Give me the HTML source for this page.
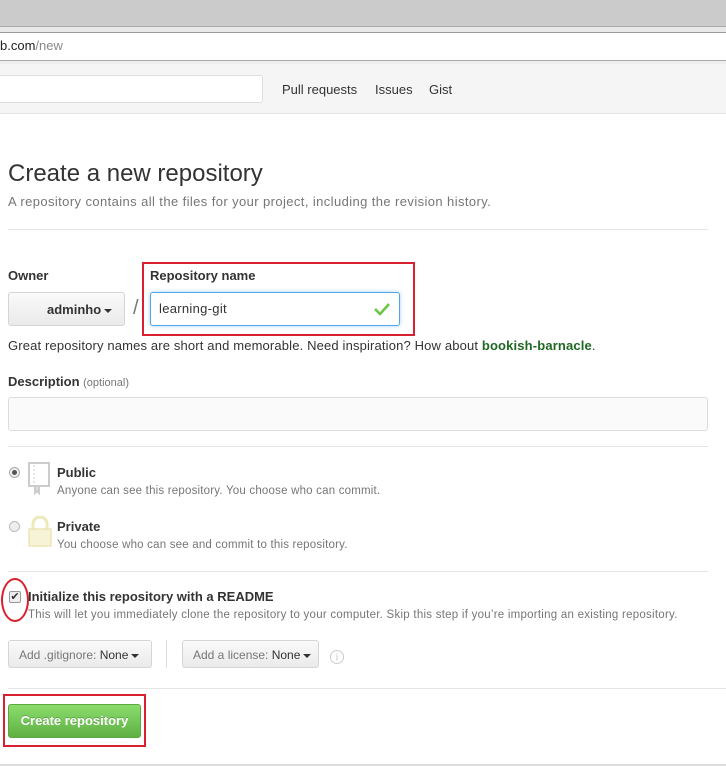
<!DOCTYPE html>
<html><head><style>
*{box-sizing:border-box;margin:0;padding:0}
body{width:726px;height:766px;overflow:hidden;background:#fff;font-family:"Liberation Sans",sans-serif;color:#333;position:relative;font-size:12px}
.a{position:absolute;white-space:nowrap}
.hr{position:absolute;left:8px;right:0;height:1px;background:#e5e5e5}
.btn{position:absolute;border:1px solid #d5d5d5;border-radius:3px;background:linear-gradient(#fafafa,#eaeaea);font-size:12px;color:#777}
.caret{display:inline-block;width:0;height:0;border-left:4px solid transparent;border-right:4px solid transparent;border-top:4px solid #333;vertical-align:middle;margin-left:3px}
</style></head><body>
<div class="a" style="left:0;top:0;width:726px;height:26px;background:#cbcbcb"></div>
<div class="a" style="left:0;top:26px;width:726px;height:6px;background:#e8e8e8;border-top:1px solid #aaa"></div>
<div class="a" style="left:0;top:32px;width:726px;height:28px;background:#fff;border-top:1px solid #999"></div>
<div class="a" style="left:0;top:38px;font-size:13px;color:#222">b.com<span style="color:#888">/new</span></div>
<div class="a" style="left:0;top:60px;width:726px;height:4px;background:#eee;border-top:1px solid #aaa"></div>
<div class="a" style="left:0;top:64px;width:726px;height:50px;background:#f5f5f5;border-bottom:1px solid #e5e5e5"></div>
<div class="a" style="left:-4px;top:75px;width:267px;height:28px;background:#fff;border:1px solid #ddd;border-radius:3px"></div>
<div class="a" style="left:282px;top:82px;font-size:13px;color:#333">Pull requests</div>
<div class="a" style="left:375px;top:82px;font-size:13px;color:#333">Issues</div>
<div class="a" style="left:429px;top:82px;font-size:13px;color:#333">Gist</div>

<div class="a" style="left:8px;top:160px;font-size:24px;color:#333">Create a new repository</div>
<div class="a" style="left:8px;top:194px;font-size:13px;letter-spacing:0.4px;color:#767676">A repository contains all the files for your project, including the revision history.</div>
<div class="hr" style="top:229px;right:18px"></div>

<div class="a" style="left:8px;top:268px;font-size:13px;font-weight:bold;color:#333">Owner</div>
<div class="btn" style="left:8px;top:292px;width:117px;height:34px"></div>
<div class="a" style="left:47px;top:302px;font-size:13px;font-weight:bold;color:#333">adminho<span class="caret"></span></div>
<div class="a" style="left:133px;top:297px;font-size:20px;color:#777">/</div>
<div class="a" style="left:150px;top:268px;font-size:13px;font-weight:bold;color:#333">Repository name</div>
<div class="a" style="left:150px;top:292px;width:250px;height:34px;border:1px solid #51a7e8;border-radius:3px;box-shadow:0 0 4px rgba(81,167,232,.5);background:#fff"></div>
<div class="a" style="left:159px;top:301px;font-size:13px;letter-spacing:0.3px;color:#333">learning-git</div>
<svg class="a" style="left:374px;top:302px" width="16" height="14"><path d="M1 7l5 5 9-10" stroke="#6cc644" stroke-width="2.6" fill="none"/></svg>
<div class="a" style="left:142px;top:262px;width:273px;height:74px;border:2px solid #d8202e"></div>
<div class="a" style="left:8px;top:338px;font-size:13px;letter-spacing:0.15px;color:#333">Great repository names are short and memorable. Need inspiration? How about <b style="color:#1e6823">bookish-barnacle</b>.</div>

<div class="a" style="left:8px;top:374px;font-size:13px;font-weight:bold;color:#333">Description <span style="font-weight:normal;font-size:11px;color:#767676">(optional)</span></div>
<div class="a" style="left:8px;top:397px;width:700px;height:34px;border:1px solid #ddd;border-radius:3px;background:#fafafa"></div>
<div class="hr" style="top:446px;right:18px"></div>

<div class="a" style="left:9px;top:467px;width:11px;height:11px;border-radius:50%;border:1px solid #aaa;background:#eee"><div style="margin:2px;width:5px;height:5px;border-radius:50%;background:#555"></div></div>
<svg class="a" style="left:28px;top:462px" width="24" height="34"><rect x="1" y="1" width="20" height="23" fill="#fff" stroke="#ccc" stroke-width="2"/><path d="M6 3v20" stroke="#ccc" stroke-dasharray="2 2"/><path d="M1 24h20M7 24v7l2-2 2 2v-7" stroke="#ccc" stroke-width="2" fill="#ddd"/></svg>
<div class="a" style="left:57px;top:465px;font-size:13px;font-weight:bold;color:#333">Public</div>
<div class="a" style="left:57px;top:485px;font-size:11.5px;letter-spacing:0.2px;color:#767676">Anyone can see this repository. You choose who can commit.</div>
<div class="a" style="left:9px;top:521px;width:11px;height:11px;border-radius:50%;border:1px solid #bbb;background:#eee"></div>
<svg class="a" style="left:27px;top:516px" width="26" height="32"><path d="M6 13V8a7 7 0 0 1 14 0v5" stroke="#eee9b8" stroke-width="3" fill="none"/><rect x="2" y="13" width="22" height="17" fill="#f6f3d6" stroke="#ebe6b4" stroke-width="1.5"/></svg>
<div class="a" style="left:57px;top:519px;font-size:13px;font-weight:bold;color:#333">Private</div>
<div class="a" style="left:57px;top:539px;font-size:11.5px;letter-spacing:0.2px;color:#767676">You choose who can see and commit to this repository.</div>
<div class="hr" style="top:571px;right:18px"></div>

<div class="a" style="left:9px;top:591px;width:12px;height:12px;border:1px solid #999;border-radius:2px;background:#eee;font-size:11px;line-height:10px;text-align:center;color:#333">✔</div>
<div class="a" style="left:1px;top:578px;width:28px;height:44px;border:2px solid #d8202e;border-radius:50%"></div>
<div class="a" style="left:28px;top:589px;font-size:13px;font-weight:bold;color:#333">Initialize this repository with a README</div>
<div class="a" style="left:28px;top:609px;font-size:11.5px;letter-spacing:0.25px;color:#767676">This will let you immediately clone the repository to your computer. Skip this step if you’re importing an existing repository.</div>
<div class="btn" style="left:8px;top:640px;width:144px;height:28px;padding:7px 10px;white-space:nowrap">Add .gitignore: <span style="color:#333">None</span><span class="caret"></span></div>
<div class="a" style="left:166px;top:640px;width:1px;height:28px;background:#ddd"></div>
<div class="btn" style="left:182px;top:640px;width:137px;height:28px;padding:7px 10px;white-space:nowrap">Add a license: <span style="color:#333">None</span><span class="caret"></span></div>
<div class="a" style="left:330px;top:650px;width:14px;height:14px;border:1px solid #ccc;border-radius:50%;font-size:9px;color:#bbb;text-align:center;line-height:12px;font-family:serif">i</div>
<div class="hr" style="top:688px;right:0"></div>

<div class="a" style="left:8px;top:704px;width:133px;height:34px;border:1px solid #5ca941;border-radius:3px;background:linear-gradient(#8add6d,#60b044);color:#fff;font-size:13px;font-weight:bold;text-align:center;line-height:32px;text-shadow:0 -1px 0 rgba(0,0,0,.2)">Create repository</div>
<div class="a" style="left:3px;top:694px;width:143px;height:53px;border:2px solid #d8202e"></div>
<div class="a" style="left:0;top:764px;width:726px;height:2px;background:#ddd"></div>
</body></html>
